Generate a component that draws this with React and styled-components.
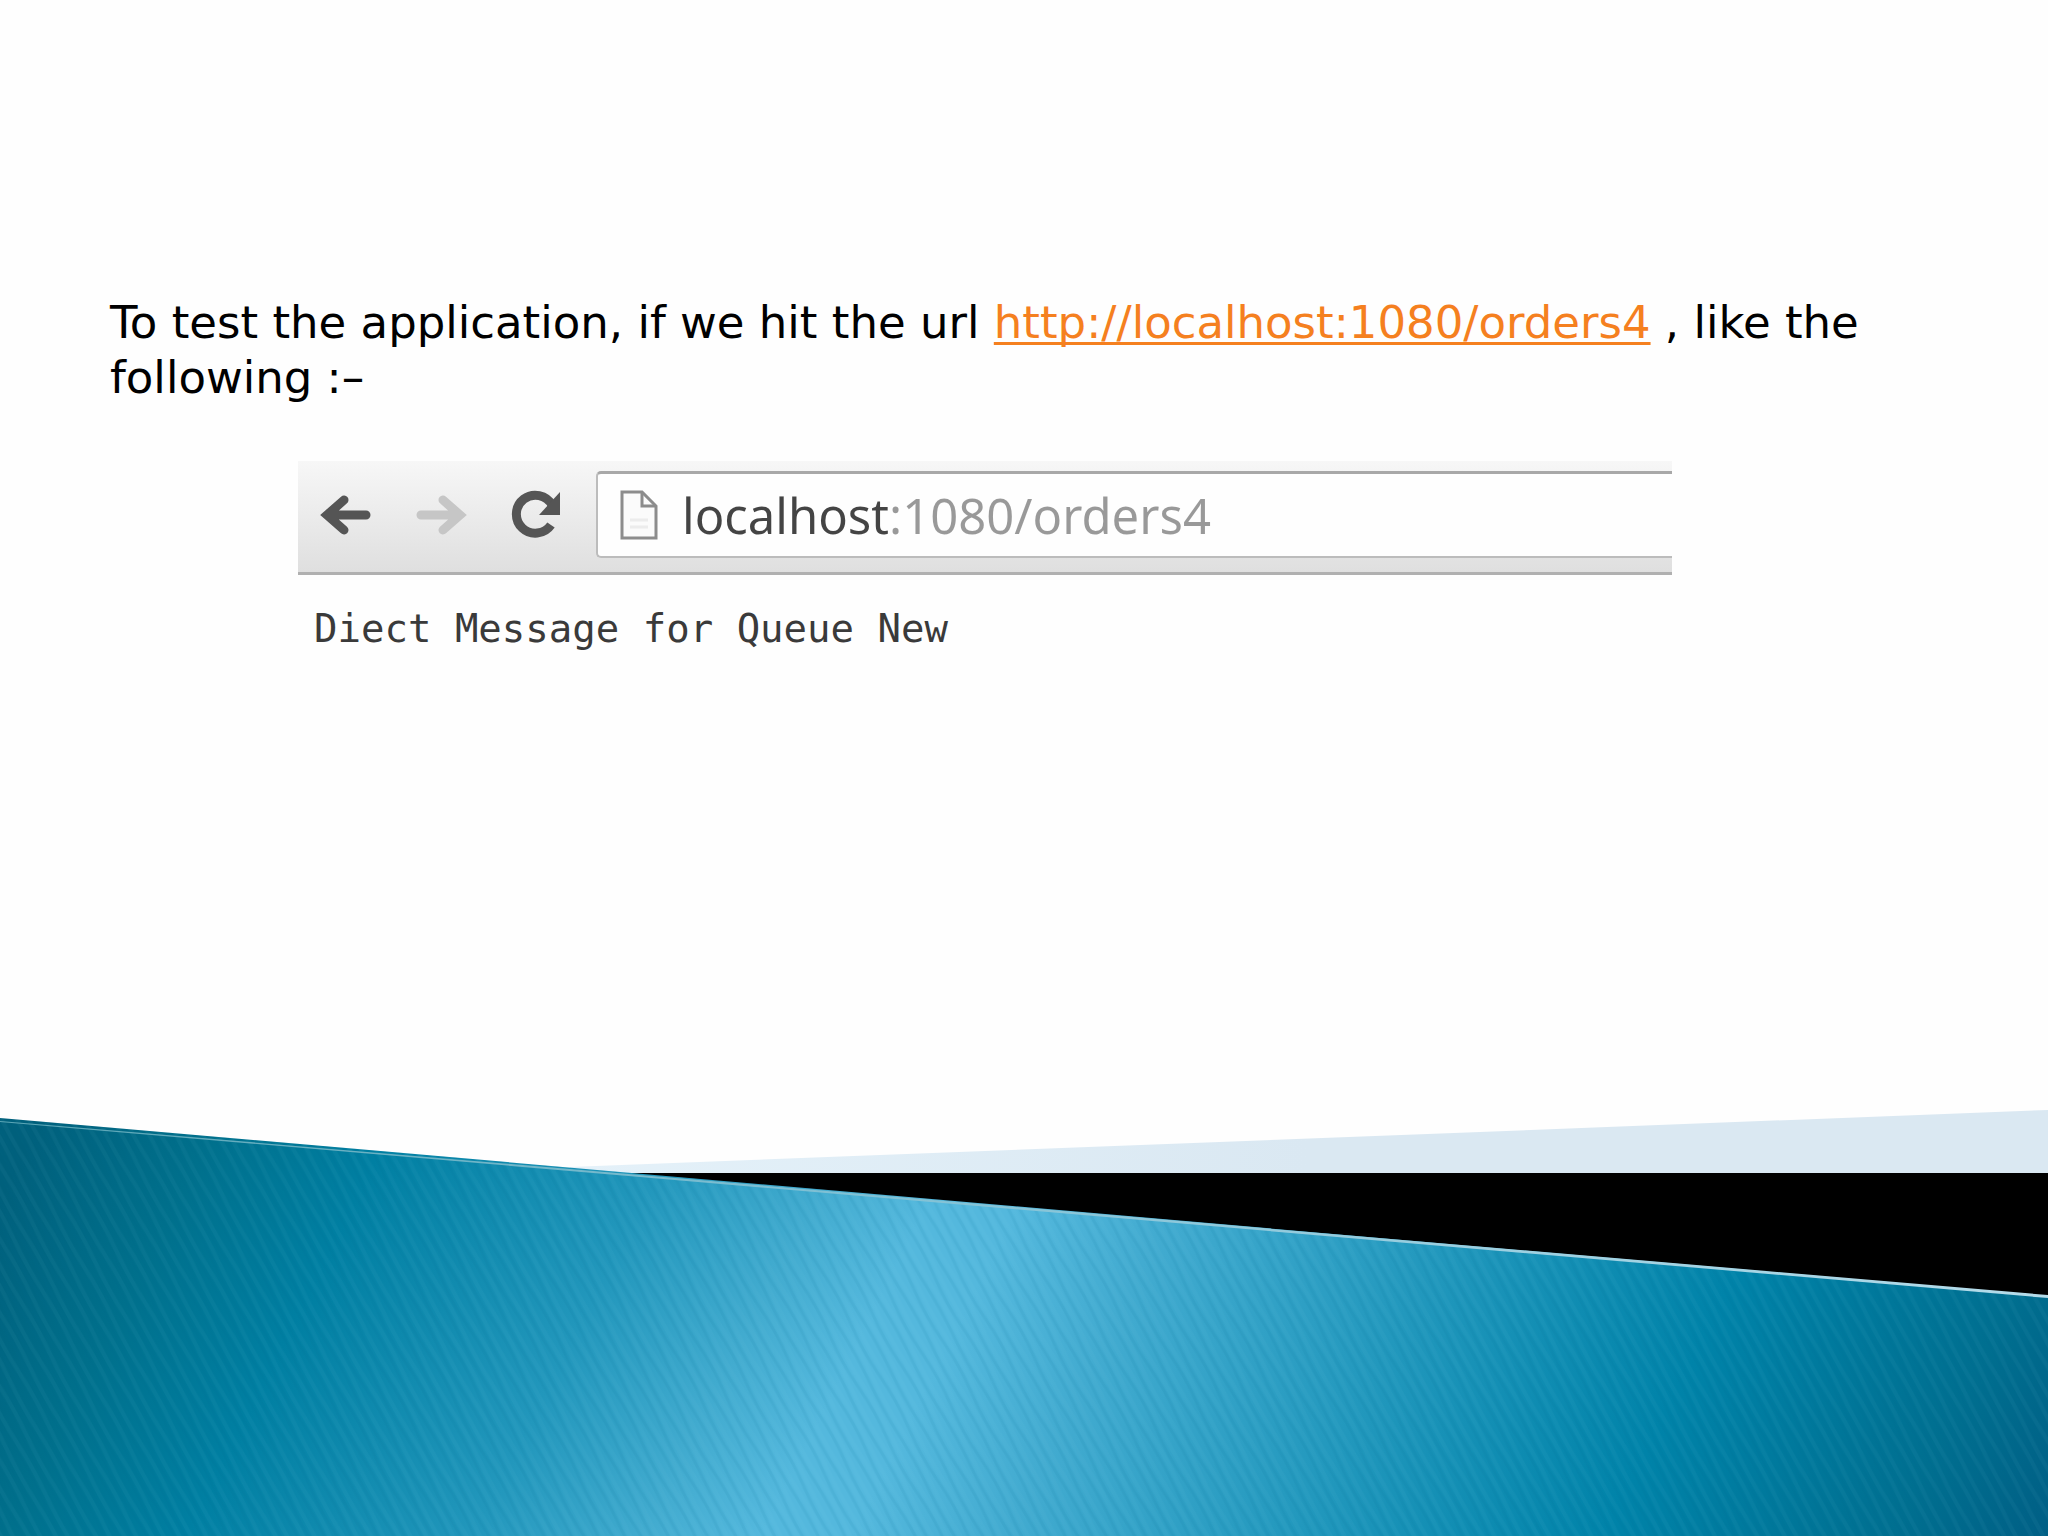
import React from 'react';
import styled, { createGlobalStyle } from 'styled-components';

const GlobalStyle = createGlobalStyle`
  body {
    margin: 0;
    background: #fefefe;
  }
`;

const Slide = styled.div`
  display: flex;
  flex-direction: column;
  min-height: 100vh;
  background: #fefefe;
`;

const Content = styled.main`
  flex: 1;
  padding: 295px 110px 40px;
`;

const Intro = styled.p`
  margin: 0;
  font-family: 'DejaVu Sans', sans-serif;
  font-size: 45px;
  line-height: 55px;
  color: #000;
`;

const UrlLink = styled.a`
  color: #f5801f;
  text-decoration: underline;
  text-decoration-thickness: 3px;
  text-underline-offset: 4px;
  text-decoration-skip-ink: none;
`;

const Browser = styled.section`
  margin: 56px 266px 0 188px;
`;

const Toolbar = styled.div`
  display: flex;
  align-items: center;
  padding: 10px 0 14px 18px;
  background: linear-gradient(#f7f7f7, #dfdfdf);
  border-bottom: 3px solid #b0b0b0;
`;

const NavButtons = styled.div`
  display: flex;
  gap: 35px;
  margin-right: 30px;
`;

const NavButton = styled.button`
  display: flex;
  padding: 0;
  border: 0;
  background: none;
  color: ${(props) => (props.disabled ? '#c6c6c6' : '#555')};
`;

const AddressBar = styled.label`
  flex: 1;
  display: flex;
  align-items: center;
  gap: 22px;
  height: 82px;
  padding-left: 20px;
  background: #fefefe;
  border: solid #bcbcbc;
  border-width: 3px 0 2px 2px;
  border-top-color: #a8a8a8;
  border-radius: 5px 0 0 5px;
`;

/* host is dark, port and path are grey */
const AddressInput = styled.input`
  flex: 1;
  min-width: 0;
  padding: 0;
  border: 0;
  outline: 0;
  font-family: 'Noto Sans', sans-serif;
  font-size: 49px;
  line-height: 66px;
  color: transparent;
  background: linear-gradient(90deg, #444 208px, #999 208px);
  background-clip: text;
`;

const Response = styled.pre`
  margin: 0;
  padding: 30px 16px 0;
  font-family: 'DejaVu Sans Mono', monospace;
  font-size: 39px;
  line-height: 48px;
  color: #3a3a3a;
`;

const Wave = styled.svg`
  display: block;
  width: 100%;
  height: auto;
`;

const BackIcon = () => (
  <svg width="60" height="60" viewBox="0 0 60 60" fill="none" stroke="currentColor" strokeWidth="9" strokeLinecap="round">
    <path d="M12 30H50M28 15L11 30L28 45" />
  </svg>
);

const ForwardIcon = () => (
  <svg width="60" height="60" viewBox="0 0 60 60" fill="none" stroke="currentColor" strokeWidth="9" strokeLinecap="round">
    <path d="M10 30H48M32 15L49 30L32 45" />
  </svg>
);

const ReloadIcon = () => (
  <svg width="60" height="60" viewBox="0 0 60 60">
    <path d="M45 40A19 19 0 1 1 46 20" fill="none" stroke="currentColor" strokeWidth="9" />
    <path d="M54 7V30H33Z" fill="currentColor" />
  </svg>
);

const PageIcon = () => (
  <svg width="42" height="54" viewBox="0 0 42 54" fill="none" stroke="#8c8c8c" strokeWidth="3">
    <path d="M4 4H24L38 18V50H4Z" fill="#fbfbfb" />
    <path d="M24 4V18H38" />
    <path d="M12 32H30M12 39H30" stroke="#ececec" />
  </svg>
);

const WaveFooter = () => (
  <Wave viewBox="0 0 2048 427" aria-hidden="true">
    <defs>
      <linearGradient id="sea" gradientUnits="userSpaceOnUse" x1="-75" y1="241" x2="1697" y2="1127">
        <stop offset="0" stopColor="#00607c" />
        <stop offset="0.08" stopColor="#00708c" />
        <stop offset="0.16" stopColor="#007fa2" />
        <stop offset="0.29" stopColor="#2297bc" />
        <stop offset="0.37" stopColor="#43acd0" />
        <stop offset="0.42" stopColor="#54b8dd" />
        <stop offset="0.46" stopColor="#54b8dd" />
        <stop offset="0.53" stopColor="#42abd0" />
        <stop offset="0.66" stopColor="#2298bd" />
        <stop offset="0.8" stopColor="#0083a9" />
        <stop offset="0.93" stopColor="#006f90" />
        <stop offset="1" stopColor="#005f85" />
      </linearGradient>
      <linearGradient id="mist" x1="0" x2="1" y1="0" y2="0">
        <stop offset="0" stopColor="#e4f1f9" />
        <stop offset="0.5" stopColor="#dae8f2" />
      </linearGradient>
      <linearGradient id="crest" x1="0" x2="1" y1="0" y2="0">
        <stop offset="0" stopColor="#5aa5b5" />
        <stop offset="0.4" stopColor="#7fc0d4" />
        <stop offset="1" stopColor="#b5dcea" />
      </linearGradient>
      <pattern id="ripples" width="24" height="120" patternUnits="userSpaceOnUse" patternTransform="rotate(-29)">
        <path d="M4 0Q6 30 4 60T4 120M16 0Q13 30 16 60T16 120" fill="none" stroke="#005f8a" strokeOpacity="0.08" strokeWidth="3" />
        <path d="M9 0Q11 30 9 60T9 120M21 0Q19 30 21 60T21 120" fill="none" stroke="#8fe0f5" strokeOpacity="0.05" strokeWidth="4" />
      </pattern>
    </defs>
    <path d="M570 58L2048 1V64H570Z" fill="url(#mist)" />
    <path d="M630 64H2048V200H630Z" fill="#000" />
    <path d="M0 9L2048 187V427H0Z" fill="url(#sea)" />
    <path d="M0 9L2048 187V427H0Z" fill="url(#ripples)" />
    <path d="M0 12L640 66L2048 186V189L640 68L0 13Z" fill="url(#crest)" />
  </Wave>
);

const App = () => (
  <>
    <GlobalStyle />
    <Slide>
      <Content>
        <Intro>
          To test the application, if we hit the url{' '}
          <UrlLink href="http://localhost:1080/orders4">http://localhost:1080/orders4</UrlLink> , like the
          <br />
          following :–
        </Intro>
        <Browser>
          <Toolbar>
            <NavButtons>
              <NavButton type="button" aria-label="Back">
                <BackIcon />
              </NavButton>
              <NavButton type="button" aria-label="Forward" disabled>
                <ForwardIcon />
              </NavButton>
              <NavButton type="button" aria-label="Reload">
                <ReloadIcon />
              </NavButton>
            </NavButtons>
            <AddressBar>
              <PageIcon />
              <AddressInput type="text" aria-label="Address" defaultValue="localhost:1080/orders4" />
            </AddressBar>
          </Toolbar>
          <Response>Diect Message for Queue New</Response>
        </Browser>
      </Content>
      <WaveFooter />
    </Slide>
  </>
);

export default App;
